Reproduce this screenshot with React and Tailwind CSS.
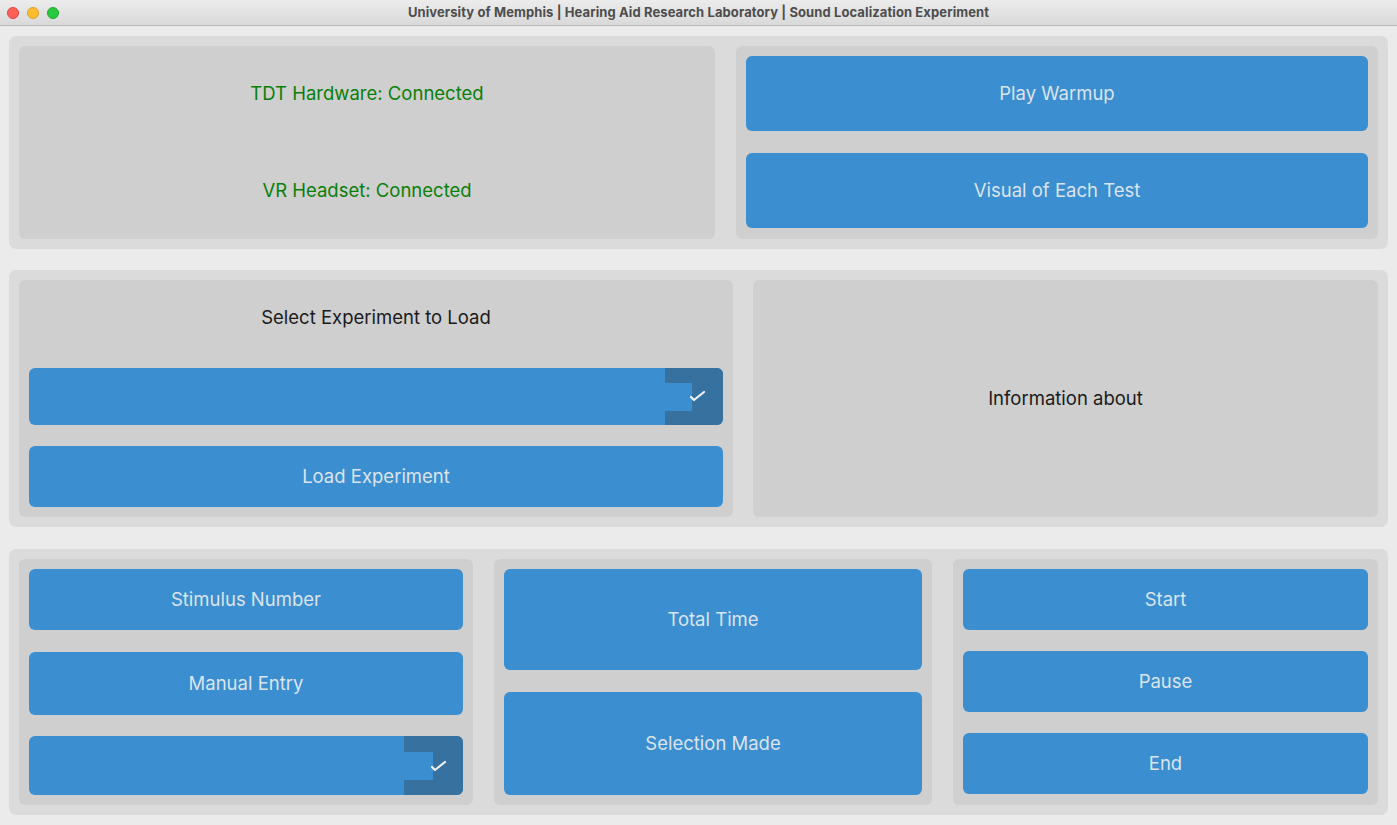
import React from "react";

const font = { fontFamily: "Inter, 'Noto Sans', sans-serif" };

function Btn({ children, className = "" }) {
  return (
    <div
      className={`flex items-center justify-center rounded-[6px] bg-[#3b8ed0] text-[18.5px] text-[#dce4ee] ${className}`}
    >
      {children}
    </div>
  );
}

function Dropdown({ className = "", armW, innerW, innerY, checkPos }) {
  return (
    <div className={`relative flex rounded-[6px] bg-[#3b8ed0] overflow-hidden ${className}`}>
      <div className="flex-1" />
      <div className={`relative bg-[#36719f] ${armW}`}>
        <div className={`absolute left-0 bg-[#3b8ed0] ${innerW} ${innerY}`} />
        <svg className={`absolute ${checkPos}`} width="16" height="14" viewBox="0 0 16 14">
          <path d="M1 7 L4 10 L14 2" fill="none" stroke="#eef3f8" strokeWidth="2.2" strokeLinecap="round" strokeLinejoin="round" />
        </svg>
      </div>
    </div>
  );
}

export default function App() {
  return (
    <div className="w-[1397px] h-[825px] bg-[#ebebeb] flex flex-col overflow-hidden" style={font}>
      {/* title bar */}
      <div className="relative h-[26px] shrink-0 border-b border-[#b9b9b9] bg-gradient-to-b from-[#ececec] to-[#d9d9d9] flex items-center justify-center">
        <div className="absolute left-[7px] top-[7px] flex gap-[8px]">
          <div className="w-[12px] h-[12px] rounded-full bg-[#fe5f57] border border-[#e0443e]" />
          <div className="w-[12px] h-[12px] rounded-full bg-[#febc2e] border border-[#dea123]" />
          <div className="w-[12px] h-[12px] rounded-full bg-[#28c840] border border-[#1aab29]" />
        </div>
        <div className="text-[13px] font-bold text-[#4d4d4d] tracking-[0.1px]">
          University of Memphis | Hearing Aid Research Laboratory | Sound Localization Experiment
        </div>
      </div>

      <div className="flex flex-col px-[9px] pt-[10px]">
        {/* row 1 */}
        <div className="h-[213px] rounded-[7px] bg-[#dbdbdb] p-[10px] flex gap-[21px]">
          <div className="w-[696px] rounded-[6px] bg-[#cfcfcf] flex flex-col px-[10px] pt-[10px] gap-[22px]">
            <div className="h-[75px] flex items-center justify-center text-[18.5px] text-[#088008]">TDT Hardware: Connected</div>
            <div className="h-[75px] flex items-center justify-center text-[18.5px] text-[#088008]">VR Headset: Connected</div>
          </div>
          <div className="flex-1 rounded-[6px] bg-[#cfcfcf] flex flex-col px-[10px] pt-[10px] gap-[22px]">
            <Btn className="h-[75px]">Play Warmup</Btn>
            <Btn className="h-[75px]">Visual of Each Test</Btn>
          </div>
        </div>

        {/* row 2 */}
        <div className="mt-[21px] h-[257px] rounded-[7px] bg-[#dbdbdb] p-[10px] flex gap-[20px]">
          <div className="w-[714px] rounded-[6px] bg-[#cfcfcf] flex flex-col px-[10px] pt-[10px]">
            <div className="h-[56px] flex items-center justify-center text-[18.5px] text-[#1a1a1a]">Select Experiment to Load</div>
            <Dropdown
              className="h-[57px] mt-[22px]"
              armW="w-[58px]"
              innerW="w-[27px]"
              innerY="top-[15px] bottom-[14px]"
              checkPos="left-[25px] top-[22px]"
            />
            <Btn className="h-[61px] mt-[21px]">Load Experiment</Btn>
          </div>
          <div className="flex-1 rounded-[6px] bg-[#cfcfcf] flex items-center justify-center text-[18.5px] text-[#1a1a1a]">
            Information about
          </div>
        </div>

        {/* row 3 */}
        <div className="mt-[22px] h-[266px] rounded-[7px] bg-[#dbdbdb] p-[10px] flex gap-[21px]">
          <div className="w-[454px] rounded-[6px] bg-[#cfcfcf] flex flex-col px-[10px] pt-[10px]">
            <Btn className="h-[61px]">Stimulus Number</Btn>
            <Btn className="h-[63px] mt-[22px]">Manual Entry</Btn>
            <Dropdown
              className="h-[59px] mt-[21px]"
              armW="w-[59px]"
              innerW="w-[29px]"
              innerY="top-[16px] bottom-[15px]"
              checkPos="left-[27px] top-[24px]"
            />
          </div>
          <div className="w-[438px] rounded-[6px] bg-[#cfcfcf] flex flex-col px-[10px] pt-[10px]">
            <Btn className="h-[101px]">Total Time</Btn>
            <Btn className="h-[103px] mt-[22px]">Selection Made</Btn>
          </div>
          <div className="flex-1 rounded-[6px] bg-[#cfcfcf] flex flex-col px-[10px] pt-[10px] gap-[21px]">
            <Btn className="h-[61px]">Start</Btn>
            <Btn className="h-[61px]">Pause</Btn>
            <Btn className="h-[61px]">End</Btn>
          </div>
        </div>
      </div>
    </div>
  );
}
